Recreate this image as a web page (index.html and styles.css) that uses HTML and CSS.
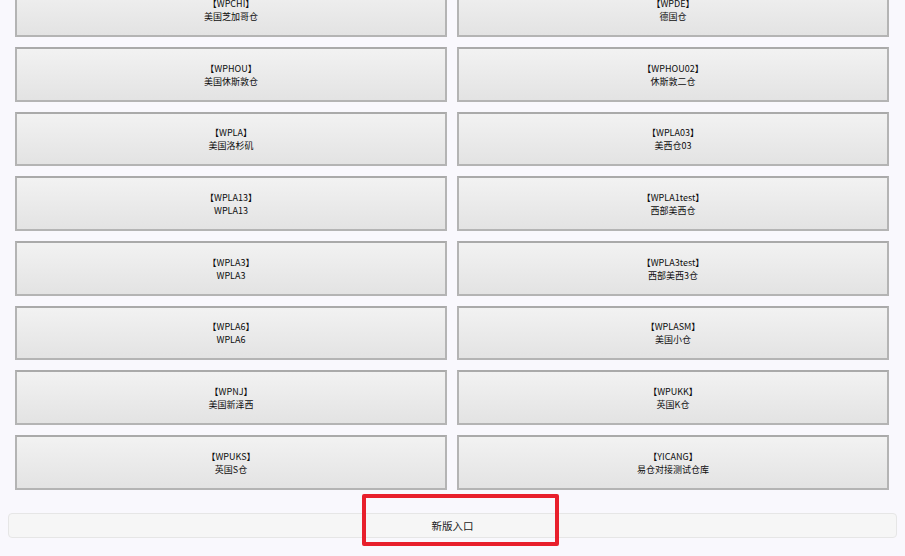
FILE: index.html
```html
<!DOCTYPE html>
<html>
	<head>
		<meta charset="utf-8" />
		<title>选择仓库</title>
		<link rel="stylesheet" href="styles.css">
	</head>
	<body>
		<div class="page">
			<div class="warehouses">
				<a href="#" class="wh"><span>【WPCHI】</span><span>美国芝加哥仓</span></a>
				<a href="#" class="wh"><span>【WPDE】</span><span>德国仓</span></a>
				<a href="#" class="wh"><span>【WPHOU】</span><span>美国休斯敦仓</span></a>
				<a href="#" class="wh"><span>【WPHOU02】</span><span>休斯敦二仓</span></a>
				<a href="#" class="wh"><span>【WPLA】</span><span>美国洛杉矶</span></a>
				<a href="#" class="wh"><span>【WPLA03】</span><span>美西仓03</span></a>
				<a href="#" class="wh"><span>【WPLA13】</span><span>WPLA13</span></a>
				<a href="#" class="wh"><span>【WPLA1test】</span><span>西部美西仓</span></a>
				<a href="#" class="wh"><span>【WPLA3】</span><span>WPLA3</span></a>
				<a href="#" class="wh"><span>【WPLA3test】</span><span>西部美西3仓</span></a>
				<a href="#" class="wh"><span>【WPLA6】</span><span>WPLA6</span></a>
				<a href="#" class="wh"><span>【WPLASM】</span><span>美国小仓</span></a>
				<a href="#" class="wh"><span>【WPNJ】</span><span>美国新泽西</span></a>
				<a href="#" class="wh"><span>【WPUKK】</span><span>英国K仓</span></a>
				<a href="#" class="wh"><span>【WPUKS】</span><span>英国S仓</span></a>
				<a href="#" class="wh"><span>【YICANG】</span><span>易仓对接测试仓库</span></a>
			</div>

			<a href="#" class="new-entry">新版入口</a>
		</div>

		<div class="mark"></div>
	</body>
</html>
```
FILE: styles.css
```css
body {
	margin: 0;
	background: #f9f8fd;
	font-family: "Noto Sans CJK SC", "Liberation Sans", sans-serif;
	color: #111;
	overflow: hidden;
}

.page {
	padding: 0 8px;
}

.warehouses {
	display: grid;
	grid-template-columns: 1fr 1fr;
	grid-auto-rows: 54.67px;
	gap: 10px;
	margin: -17.67px 8px 0 7px;
}

.wh {
	display: flex;
	flex-direction: column;
	align-items: center;
	justify-content: center;
	box-sizing: border-box;
	border: 2px solid #b4b4b4;
	border-top-color: #aaaaaa;
	background: linear-gradient(#f2f2f2, #e3e3e3);
	color: #0d0d0d;
	text-decoration: none;
	font-size: 9px;
	line-height: 13.2px;
	padding-top: 1px;
}

.wh span {
	display: block;
}

.new-entry {
	display: block;
	margin-top: 23px;
	height: 25px;
	box-sizing: border-box;
	border: 1px solid #e6e6e6;
	border-radius: 4px;
	background: #f6f6f6;
	color: #1a1a1a;
	text-decoration: none;
	text-align: center;
	font-size: 10.5px;
	line-height: 23px;
}

/* annotation box drawn over the new entry link */
.mark {
	position: absolute;
	left: 362px;
	top: 494px;
	width: 197px;
	height: 52px;
	box-sizing: border-box;
	border: 4px solid #e81f2c;
	border-radius: 2px;
}
```
